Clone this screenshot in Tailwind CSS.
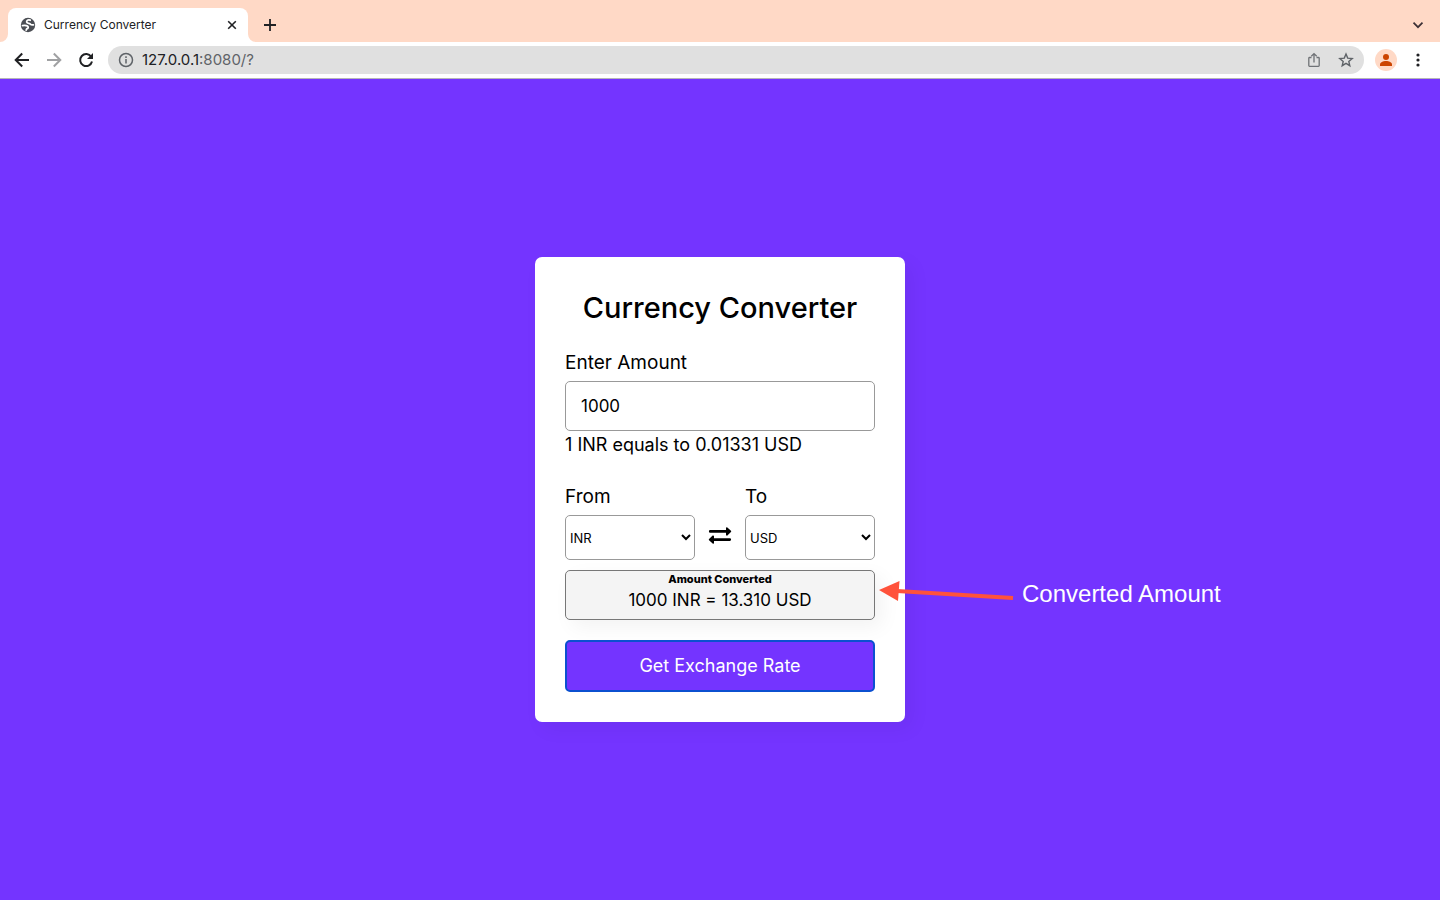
<!DOCTYPE html>
<html lang="en">
<head>
<meta charset="utf-8">
<title>Currency Converter</title>
<script src="https://cdn.jsdelivr.net/npm/@tailwindcss/browser@4"></script>
</head>
<body class="flex min-h-screen flex-col bg-[#7434ff] font-['Inter',sans-serif] text-black">
<header>
  <div class="flex h-[42px] items-end bg-[#ffd9c6] pl-2 pr-3">
    <div class="relative flex h-[34px] w-60 items-center rounded-t-lg bg-white px-3">
      <svg class="absolute bottom-0 -left-2 size-2" viewBox="0 0 8 8" fill="#fff" aria-hidden="true"><path d="M8 0v8H0a8 8 0 0 0 8-8z"/></svg>
      <svg class="absolute bottom-0 -right-2 size-2" viewBox="0 0 8 8" fill="#fff" aria-hidden="true"><path d="M0 0v8h8a8 8 0 0 1-8-8z"/></svg>
      <svg class="size-4" viewBox="0 0 16 16" aria-hidden="true"><circle cx="8" cy="8" r="7.2" fill="#4b4e54"/><path d="M10.500 3C8 2.600 6.200 3.600 6.300 5.400c.1 1.500 1.500 1.700 2.900 1.800 1.200.1 1.200.9 2.300.9h2.600c.1 2.800-1.600 5-4.300 5.800-.9.200-2 .3-2.900.1-.2-1.200.4-1.700 1.300-2 .9-.4 1.200-1.100.8-1.900-.4-.9-1.500-1.100-2.800-1.200H2.300C1.900 6 3.500 3.600 5.800 2.500 7.500 1.800 9.400 1.900 10.500 3z" fill="none"/><path d="M10.200 3.200C7.900 2.400 6.400 3.600 6.700 5c.4 1.800 3 1.100 3.800 2.200.5.700 1.600.8 2.900.6M2.500 8.600c1.600-.2 3.700-.3 4.900.5 1.200.8.900 2.200-.3 2.600-.7.300-.8.900-.9 1.400" fill="none" stroke="#fff" stroke-width="1.800" stroke-linecap="round"/></svg>
      <span class="ml-2 flex-1 text-xs text-[#202124]">Currency Converter</span>
      <button type="button" aria-label="Close tab" class="-mr-1 flex size-4 items-center justify-center"><svg class="size-3" viewBox="0 0 12 12" fill="none" stroke="#202124" stroke-width="1.600"><path d="M2.200 2.200l7.600 7.600M9.800 2.200L2.200 9.800"/></svg></button>
    </div>
    <button type="button" aria-label="New tab" class="ml-3 flex h-[34px] w-5 items-center justify-center"><svg class="size-3" viewBox="0 0 12 12" stroke="#202124" stroke-width="1.800"><path d="M6 0v12M0 6h12"/></svg></button>
    <button type="button" aria-label="Search tabs" class="ml-auto flex h-[34px] w-5 items-center justify-center"><svg class="h-2 w-3" viewBox="0 0 12 8" fill="none" stroke="#3c3035" stroke-width="1.700"><path d="M1.500 1.700L6 6.200l4.500-4.500"/></svg></button>
  </div>
  <div class="flex h-[37px] items-center border-b border-[#b5b5b8] bg-white pr-3 pl-3">
    <button type="button" aria-label="Back" class="flex size-5 items-center justify-center"><svg class="size-4" viewBox="0 0 16 16" fill="none" stroke="#202124" stroke-width="2"><path d="M15 8H2M8.200 1.500L1.700 8l6.500 6.500"/></svg></button>
    <button type="button" aria-label="Forward" class="ml-3 flex size-5 items-center justify-center"><svg class="size-4" viewBox="0 0 16 16" fill="none" stroke="#a0a1a3" stroke-width="2"><path d="M1 8h13M7.800 1.500L14.300 8l-6.500 6.500"/></svg></button>
    <button type="button" aria-label="Reload" class="ml-3 flex size-5 items-center justify-center"><svg class="size-4" viewBox="0 0 16 16" fill="none"><path d="M13.200 4.800A6 6 0 1 0 14 9.500" stroke="#202124" stroke-width="2"/><path d="M15 1v6H9z" fill="#202124"/></svg></button>
    <div class="ml-3 flex h-7 flex-1 items-center rounded-full bg-[#e0e0e0] px-[10px]">
      <svg class="size-4 shrink-0" viewBox="0 0 16 16" fill="none" stroke="#5f6368" stroke-width="1.500" aria-hidden="true"><circle cx="8" cy="8" r="6.500"/><path d="M8 7v4.500M8 4.300v1.600"/></svg>
      <div class="ml-2 flex-1 text-[15px] leading-5 text-[#5f6368]"><span class="text-[#202124]">127.0.0.1</span>:8080/?</div>
      <button type="button" aria-label="Share" class="mr-4 size-4"><svg class="size-4" viewBox="0 0 16 16" fill="none" stroke="#6f7276" stroke-width="1.300"><path d="M5.500 5.500H3.600q-.8 0-.8.800v7.200q0 .8.800.8h8.800q.8 0 .8-.8V6.300q0-.8-.8-.8h-1.900M8 10.500V2M5.300 4.300L8 1.600l2.700 2.700"/></svg></button>
      <button type="button" aria-label="Bookmark" class="size-4"><svg class="size-4" viewBox="0 0 16 16" fill="none" stroke="#5f6368" stroke-width="1.400"><path d="M8 2l1.700 4.100 4.500.4-3.400 2.900 1 4.300L8 11.400l-3.800 2.300 1-4.300-3.400-2.900 4.500-.4z"/></svg></button>
    </div>
    <button type="button" aria-label="Profile" class="ml-[11px] flex size-[22px] items-center justify-center rounded-full bg-[#ffd9c6]"><svg class="size-4" viewBox="0 0 16 16" fill="#cc4400"><circle cx="8" cy="5" r="3"/><path d="M2 14v-1.500C2 10.300 5 9 8 9s6 1.300 6 3.500V14z"/></svg></button>
    <button type="button" aria-label="Menu" class="ml-[11px] flex h-5 w-5 items-center justify-center"><svg class="h-4 w-1" viewBox="0 0 4 16" fill="#202124"><circle cx="2" cy="3" r="1.600"/><circle cx="2" cy="8" r="1.600"/><circle cx="2" cy="13" r="1.600"/></svg></button>
  </div>
</header>
<main class="flex flex-1 items-center justify-center">
  <section class="relative w-[370px] rounded-[7px] bg-white p-[30px] shadow-[7px_7px_20px_rgba(0,0,0,0.05)]">
    <h1 class="text-center text-[29px] leading-[42px] font-medium">Currency Converter</h1>
    <form class="mt-5 text-lg leading-[27px]">
      <label for="amount" class="block text-[19px]">Enter Amount</label>
      <input id="amount" type="text" value="1000" class="mt-[5px] block h-[50px] w-full rounded-[5px] border border-[#999] px-[15px] text-[17px] outline-none">
      <p>1 INR equals to 0.01331 USD</p>
      <div class="mt-[25px] flex items-end justify-between">
        <div class="w-[130px]">
          <label for="from" class="block text-[19px]">From</label>
          <select id="from" class="mt-[5px] block h-[45px] w-full rounded-[5px] border border-[#999] text-[13px]"><option>INR</option></select>
        </div>
        <button type="button" aria-label="Swap currencies" class="mb-[15px]"><svg class="h-5 w-6" viewBox="0 0 24 20"><path d="M2.200 6.400h16M6 14.600h15.800" stroke="#000" stroke-width="2.600" stroke-linecap="round"/><path d="M18.800 3l3.600 3.400-3.600 3.400zM5.200 11.200l-3.600 3.400L5.200 18z" stroke="#000" stroke-width="1.600" stroke-linejoin="round"/></svg></button>
        <div class="w-[130px]">
          <label for="to" class="block text-[19px]">To</label>
          <select id="to" class="mt-[5px] block h-[45px] w-full rounded-[5px] border border-[#999] text-[13px]"><option>USD</option></select>
        </div>
      </div>
      <div class="mt-[10px] h-[50px] rounded-[5px] border border-[#777] bg-[#f4f4f4] text-center shadow-[7px_7px_20px_rgba(0,0,0,0.05)]">
        <h2 class="text-[11px] leading-4 font-extrabold">Amount Converted</h2>
        <output class="block text-[17px]">1000 INR = 13.310 USD</output>
      </div>
      <button type="button" class="mt-5 block h-[52px] w-full rounded-[5px] border-2 border-[#0b50d0] bg-[#7434ff] text-lg text-white">Get Exchange Rate</button>
    </form>
    <div class="absolute top-[322px] left-[344px] flex items-start">
      <svg class="h-6 w-[136px] shrink-0" viewBox="0 0 136 24" aria-hidden="true"><path d="M18 12l116 7" stroke="#ff523b" stroke-width="4"/><path d="M0 11L20.500 2l-1.500 20z" fill="#ff523b"/></svg>
      <span class="ml-[7px] font-['Liberation_Sans',sans-serif] text-2xl leading-[30px] whitespace-nowrap text-white">Converted Amount</span>
    </div>
  </section>
</main>
</body>
</html>
